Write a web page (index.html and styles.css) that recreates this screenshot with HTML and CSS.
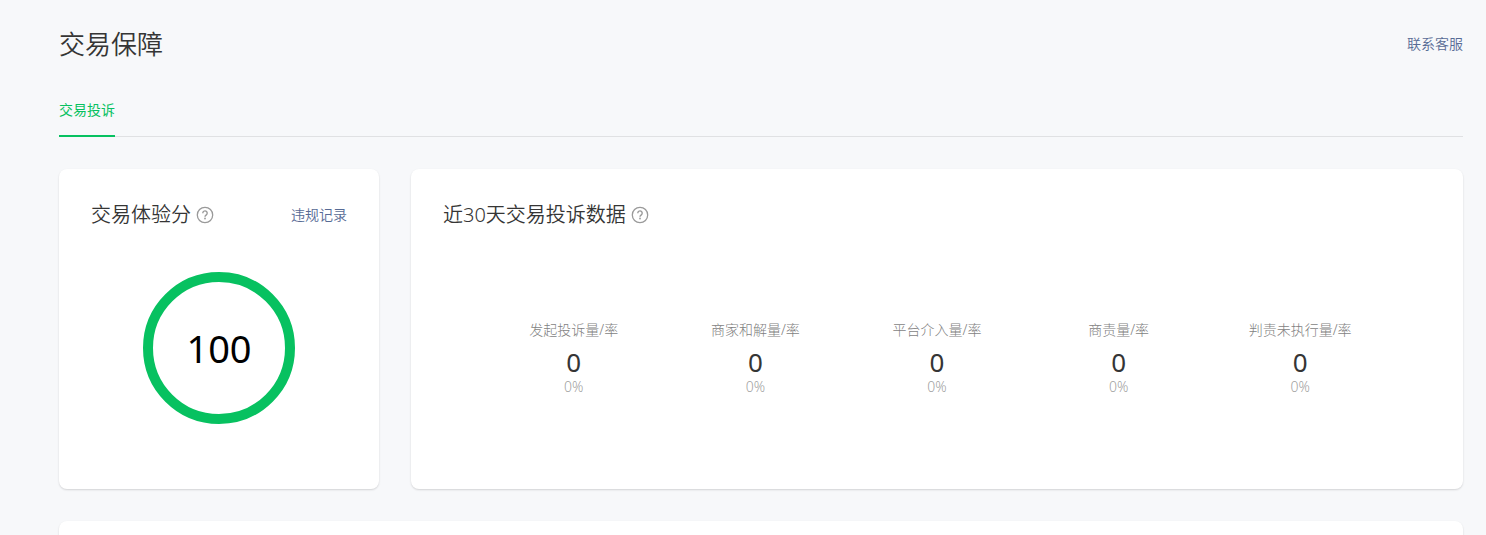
FILE: index.html
```html
<!DOCTYPE html>
<html lang="zh-CN">
<head>
  <meta charset="UTF-8">
  <meta name="viewport" content="width=device-width, initial-scale=1.0">
  <title>交易保障</title>
  <link rel="stylesheet" href="styles.css">
</head>
<body>
  <div class="page">
    <header class="page-header">
      <h1>交易保障</h1>
      <a href="#" class="link">联系客服</a>
    </header>

    <nav class="tabs">
      <a href="#" class="tab">交易投诉</a>
    </nav>

    <main class="cards">
      <section class="card score-card">
        <div class="card-header">
          <h2>交易体验分</h2>
          <button type="button" class="help" aria-label="交易体验分说明">
            <svg viewBox="0 0 18 18" width="18" height="18" fill="none" stroke="currentColor">
              <circle cx="9" cy="9" r="7.7" stroke-width="1.3"/>
              <path d="M6.8 7.2a2.2 2.2 0 1 1 3.5 1.7c-.8.6-1.3 1-1.3 1.9" stroke-width="1.4"/>
              <circle cx="9" cy="12.5" r=".9" fill="currentColor" stroke="none"/>
            </svg>
          </button>
          <a href="#" class="link">违规记录</a>
        </div>
        <div class="score">100</div>
      </section>

      <section class="card data-card">
        <div class="card-header">
          <h2>近30天交易投诉数据</h2>
          <button type="button" class="help" aria-label="交易投诉数据说明">
            <svg viewBox="0 0 18 18" width="18" height="18" fill="none" stroke="currentColor">
              <circle cx="9" cy="9" r="7.7" stroke-width="1.3"/>
              <path d="M6.8 7.2a2.2 2.2 0 1 1 3.5 1.7c-.8.6-1.3 1-1.3 1.9" stroke-width="1.4"/>
              <circle cx="9" cy="12.5" r=".9" fill="currentColor" stroke="none"/>
            </svg>
          </button>
        </div>
        <ul class="stats">
          <li>
            <span class="stat-label">发起投诉量/率</span>
            <span class="stat-value">0</span>
            <span class="stat-rate">0%</span>
          </li>
          <li>
            <span class="stat-label">商家和解量/率</span>
            <span class="stat-value">0</span>
            <span class="stat-rate">0%</span>
          </li>
          <li>
            <span class="stat-label">平台介入量/率</span>
            <span class="stat-value">0</span>
            <span class="stat-rate">0%</span>
          </li>
          <li>
            <span class="stat-label">商责量/率</span>
            <span class="stat-value">0</span>
            <span class="stat-rate">0%</span>
          </li>
          <li>
            <span class="stat-label">判责未执行量/率</span>
            <span class="stat-value">0</span>
            <span class="stat-rate">0%</span>
          </li>
        </ul>
      </section>

      <section class="card list-card"></section>
    </main>
  </div>
</body>
</html>
```

FILE: styles.css
```css
* {
  box-sizing: border-box;
}
body {
  margin: 0;
  background: #f7f8fa;
  color: #353535;
  font-family: "Noto Sans", "Noto Sans CJK SC", sans-serif;
  font-size: 14px;
  line-height: 20px;
}
h1, h2 {
  margin: 0;
  font-weight: 350;
}
a {
  text-decoration: none;
}
.page {
  padding: 24px 23px 0 59px;
}
.page-header {
  display: flex;
  align-items: center;
  justify-content: space-between;
  height: 40px;
}
h1 {
  font-size: 26px;
  line-height: 40px;
}
.link {
  color: #576b95;
  font-weight: 350;
}
.tabs {
  display: flex;
  margin-top: 36px;
  border-bottom: 1px solid #e0e1e3;
}
.tab {
  margin-bottom: -1px;
  padding-bottom: 15px;
  color: #07c160;
  border-bottom: 2px solid #07c160;
}
.cards {
  display: grid;
  grid-template-columns: 320px 1fr;
  gap: 32px;
  margin-top: 32px;
}
.card {
  padding: 32px;
  background: #fff;
  border-radius: 8px;
  box-shadow: 0 1px 2px rgba(0, 0, 0, 0.15);
}
.card-header {
  display: flex;
  align-items: center;
}
h2 {
  font-size: 20px;
  line-height: 28px;
}
.card-header .link {
  margin-left: auto;
}
.help {
  display: flex;
  margin-left: 5px;
  padding: 0;
  border: none;
  background: none;
  color: #9a9a9a;
  cursor: pointer;
}
.score-card {
  min-height: 320px;
}
.score {
  display: flex;
  align-items: center;
  justify-content: center;
  width: 152px;
  height: 152px;
  margin: 43px auto 0;
  border: 10px solid #07c160;
  border-radius: 50%;
  color: #000;
  font-size: 38px;
}
.data-card {
  display: flex;
  flex-direction: column;
}
.stats {
  display: grid;
  grid-template-columns: repeat(5, 1fr);
  margin: 91px 40px 0;
  padding: 0;
  list-style: none;
  text-align: center;
}
.stats li {
  display: flex;
  flex-direction: column;
}
.stat-label {
  color: #7f7f7f;
  font-weight: 300;
}
.stat-value {
  margin-top: 6px;
  font-size: 26px;
  line-height: 32px;
}
.stat-rate {
  color: #9f9f9f;
  font-weight: 300;
  line-height: 18px;
}
.list-card {
  grid-column: 1 / -1;
}
```
